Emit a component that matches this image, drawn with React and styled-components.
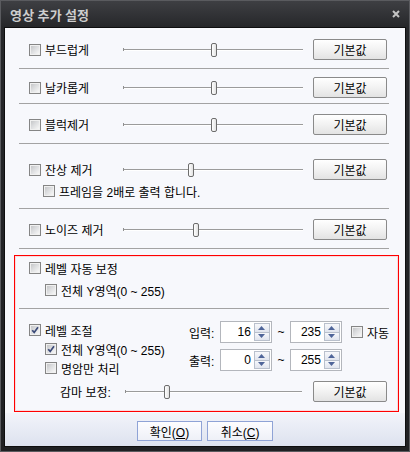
import React from 'react';
import styled, { createGlobalStyle } from 'styled-components';

const GlobalStyle = createGlobalStyle`
  html, body {
    margin: 0;
    padding: 0;
    background: #ffffff;
  }
  body {
    font-family: "Liberation Sans", "Noto Sans CJK KR", sans-serif;
    font-size: 12px;
    color: #000;
  }
`;

const Window = styled.div`
  box-sizing: border-box;
  width: 410px;
  height: 452px;
  display: flex;
  flex-direction: column;
  padding: 0 3px 4px;
  border: 1px solid #5a5b5f;
  background: linear-gradient(#3e3f43, #26272a 26px, #1f2023);
`;

const TitleBar = styled.div`
  height: 26px;
  flex: none;
  display: flex;
  align-items: center;
  justify-content: space-between;
  padding: 0 6px 0 6px;
`;

const Title = styled.span`
  font-family: "Noto Sans CJK KR", sans-serif;
  font-size: 13px;
  font-weight: 700;
  color: #cdcdcd;
  letter-spacing: 0.2px;
`;

const Close = styled.span`
  display: flex;
  width: 8px;
  height: 8px;
  margin-top: -1px;
`;

const Body = styled.div`
  flex: 1;
  display: flex;
  flex-direction: column;
  border: 1px solid #0e0e0f;
  background: #f7f8fc;
`;

const Main = styled.div`
  flex: 1;
  display: flex;
  flex-direction: column;
  padding: 0 6px 1px 9px;
`;

const Section = styled.div`
  margin: 0 10px 0 5px;
  padding: ${(p) => p.$pt}px 0 ${(p) => p.$pb}px 10px;
  border-bottom: 1px solid #a3a3a3;
  display: flex;
  flex-direction: column;
`;

const LevelBox = styled.div`
  margin-top: 6px;
  border: 1px solid #ff0000;
  box-shadow: inset 0 0 0 1px rgba(255, 90, 90, 0.18);
  display: flex;
  flex-direction: column;
`;

const LevelSection = styled(Section)`
  margin: 0 9px 0 4px;
  &:last-child {
    border-bottom: none;
  }
`;

const Row = styled.div`
  height: 21px;
  display: grid;
  grid-template-columns: 84px 180px 74px;
  column-gap: 10px;
  align-items: center;
`;

const CheckRow = styled.label`
  height: 18px;
  display: flex;
  align-items: center;
  gap: 4px;
  white-space: nowrap;
  padding-left: ${(p) => p.$indent || 0}px;
  margin-top: ${(p) => p.$mt || 0}px;
`;

const Box = styled.span`
  box-sizing: border-box;
  width: 12px;
  height: 12px;
  flex: none;
  display: flex;
  align-items: center;
  justify-content: center;
  border: 1px solid #858585;
  background: linear-gradient(135deg, #bfc0c2 0%, #dcdddf 45%, #f4f4f4 85%, #ffffff 100%);
  box-shadow: inset 0 0 0 1px #f0f0f0;
`;

const Track = styled.div`
  position: relative;
  height: 16px;

  &::before {
    content: '';
    position: absolute;
    left: 0;
    right: 0;
    top: 7px;
    height: 1px;
    background: #9b9b9b;
    border-bottom: 1px solid #ffffff;
  }

  &::after {
    content: '';
    position: absolute;
    left: 0;
    top: 6px;
    width: 1px;
    height: 3px;
    background: #8f8f8f;
  }
`;

const Thumb = styled.span`
  position: absolute;
  top: 1px;
  left: ${(p) => p.$at}px;
  box-sizing: border-box;
  width: 6px;
  height: 14px;
  border: 1px solid #6d6d6d;
  border-radius: 2px;
  background: linear-gradient(90deg, #ffffff, #e2e2e2);
  z-index: 1;
`;

const Button = styled.button`
  box-sizing: border-box;
  height: 21px;
  width: 74px;
  padding: 0;
  font-family: "Liberation Sans", "Noto Sans CJK KR", sans-serif;
  font-size: 12px;
  color: #000;
  border: 1px solid #8a8a8a;
  border-radius: 2px;
  background: linear-gradient(#ffffff, #f2f2f2 50%, #e3e3e3);
`;

const LevelGrid = styled.div`
  display: flex;
`;

const LeftCol = styled.div`
  width: 161px;
  display: flex;
  flex-direction: column;
  gap: 1px;
`;

const RightCol = styled.div`
  display: flex;
  flex-direction: column;
  gap: 6px;
`;

const SpinRow = styled.div`
  height: 22px;
  display: flex;
  align-items: center;
`;

const SpinLabel = styled.span`
  width: 31px;
`;

const Tilde = styled.span`
  width: 18px;
  text-align: center;
`;

const SpinBox = styled.div`
  box-sizing: border-box;
  width: 52px;
  height: 22px;
  display: flex;
  padding: 1px;
  border: 1px solid #b3b6bc;
  background: #ffffff;
`;

const SpinValue = styled.span`
  flex: 1;
  text-align: right;
  padding-right: 3px;
  line-height: 18px;
`;

const SpinButtons = styled.div`
  width: 16px;
  display: flex;
  flex-direction: column;
`;

const SpinHalf = styled.span`
  flex: 1;
  display: flex;
  align-items: center;
  justify-content: center;
  border: 1px solid #b9c0cc;
  background: linear-gradient(#f7f8fb, #e1e5ee);
  & + & {
    margin-top: -1px;
  }
`;

const AutoCheck = styled(CheckRow)`
  margin-left: 9px;
`;

const GammaRow = styled.div`
  margin-top: 4px;
  height: 21px;
  padding-left: 31px;
  display: grid;
  grid-template-columns: 54px 177px 74px;
  column-gap: 11px;
  align-items: center;
`;

const Footer = styled.div`
  height: 33px;
  flex: none;
  box-sizing: border-box;
  padding-top: 8px;
  display: flex;
  justify-content: center;
  align-items: flex-start;
  gap: 5px;
  background: linear-gradient(#f2f4fa, #dde2ef);
`;

const FooterButton = styled.button`
  box-sizing: border-box;
  width: ${(p) => p.$w}px;
  height: 20px;
  padding: 0;
  font-family: "Liberation Sans", "Noto Sans CJK KR", sans-serif;
  font-size: 12px;
  color: #000;
  border: 1px solid #8fa3d6;
  background: linear-gradient(#fdfdff, #eef0f7);
`;

function Check({ checked, children, indent, mt }) {
  return (
    <CheckRow $indent={indent} $mt={mt}>
      <Box>
        {checked && (
          <svg width="10" height="10" viewBox="0 0 10 10">
            <path d="M2.2 5.2 L4.2 7.4 L8 2.2" fill="none" stroke="#3b4a78" strokeWidth="1.7" />
          </svg>
        )}
      </Box>
      <span>{children}</span>
    </CheckRow>
  );
}

function Slider({ at }) {
  return (
    <Track>
      <Thumb $at={at} />
    </Track>
  );
}

function Spin({ value }) {
  return (
    <SpinBox>
      <SpinValue>{value}</SpinValue>
      <SpinButtons>
        <SpinHalf>
          <svg width="7" height="4" viewBox="0 0 7 4">
            <path d="M0 4 L3.5 0 L7 4 Z" fill="#4f6599" />
          </svg>
        </SpinHalf>
        <SpinHalf>
          <svg width="7" height="4" viewBox="0 0 7 4">
            <path d="M0 0 L3.5 4 L7 0 Z" fill="#4f6599" />
          </svg>
        </SpinHalf>
      </SpinButtons>
    </SpinBox>
  );
}

function FilterRow({ label, at }) {
  return (
    <Row>
      <Check>{label}</Check>
      <Slider at={at} />
      <Button>기본값</Button>
    </Row>
  );
}

export default function App() {
  return (
    <>
      <GlobalStyle />
      <Window>
        <TitleBar>
          <Title>영상 추가 설정</Title>
          <Close>
            <svg width="8" height="8" viewBox="0 0 8 8">
              <path d="M1 1 L7 7 M7 1 L1 7" stroke="#c4c4c4" strokeWidth="2" />
            </svg>
          </Close>
        </TitleBar>
        <Body>
          <Main>
            <Section $pt={11} $pb={8}>
              <FilterRow label="부드럽게" at={88} />
            </Section>
            <Section $pt={8} $pb={5}>
              <FilterRow label="날카롭게" at={88} />
            </Section>
            <Section $pt={10} $pb={8}>
              <FilterRow label="블럭제거" at={88} />
            </Section>
            <Section $pt={15} $pb={8}>
              <FilterRow label="잔상 제거" at={65} />
              <Check indent={14} mt={2}>프레임을 2배로 출력 합니다.</Check>
            </Section>
            <Section $pt={10} $pb={8}>
              <FilterRow label="노이즈 제거" at={70} />
            </Section>

            <LevelBox>
              <LevelSection $pt={3} $pb={9}>
                <Check>레벨 자동 보정</Check>
                <Check indent={16} mt={4}>전체 Y영역(0 ~ 255)</Check>
              </LevelSection>
              <LevelSection $pt={12} $pb={9}>
                <LevelGrid>
                  <LeftCol>
                    <Check checked>레벨 조절</Check>
                    <Check checked indent={16}>전체 Y영역(0 ~ 255)</Check>
                    <Check indent={16}>명암만 처리</Check>
                  </LeftCol>
                  <RightCol>
                    <SpinRow>
                      <SpinLabel>입력:</SpinLabel>
                      <Spin value="16" />
                      <Tilde>~</Tilde>
                      <Spin value="235" />
                      <AutoCheck as="span">
                        <Box />
                        <span>자동</span>
                      </AutoCheck>
                    </SpinRow>
                    <SpinRow>
                      <SpinLabel>출력:</SpinLabel>
                      <Spin value="0" />
                      <Tilde>~</Tilde>
                      <Spin value="255" />
                    </SpinRow>
                  </RightCol>
                </LevelGrid>
                <GammaRow>
                  <span>감마 보정:</span>
                  <Slider at={39} />
                  <Button>기본값</Button>
                </GammaRow>
              </LevelSection>
            </LevelBox>
          </Main>
          <Footer>
            <FooterButton $w={65}>
              확인(<u>O</u>)
            </FooterButton>
            <FooterButton $w={66}>
              취소(<u>C</u>)
            </FooterButton>
          </Footer>
        </Body>
      </Window>
    </>
  );
}
